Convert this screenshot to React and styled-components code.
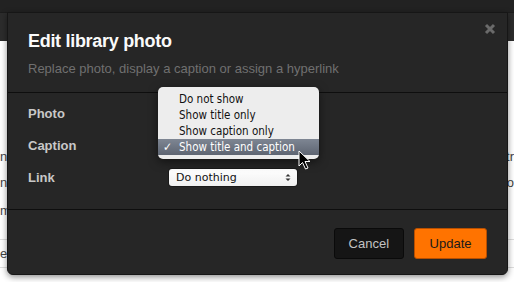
import React from 'react';
import styled, { createGlobalStyle } from 'styled-components';

const GlobalStyle = createGlobalStyle`
  html, body {
    margin: 0;
    padding: 0;
    background: #fff;
    overflow: hidden;
  }
  body {
    font-family: "Liberation Sans", Arial, sans-serif;
  }
`;

const Page = styled.div`
  position: relative;
  width: 514px;
  height: 282px;
  overflow: hidden;
  background: #fff;
`;

const TopBar = styled.div`
  height: 12px;
  background: #222;
`;

const SubBar = styled.div`
  height: 29px;
  background: #2c2c2c;
  border-top: 1px solid #1c1c1c;
  box-sizing: border-box;
`;

const Content = styled.div`
  display: flex;
  flex-direction: column;
  padding-top: 103px;
  font-size: 13px;
  color: #444;
`;

const BackRow = styled.div`
  display: flex;
  justify-content: space-between;
  height: ${({ $h }) => $h}px;
  line-height: ${({ $lh }) => $lh}px;
  border-bottom: ${({ $line }) => ($line ? '1px solid #ddd' : 'none')};
`;

const Fragment = styled.span`
  white-space: nowrap;
`;

const Modal = styled.div`
  position: absolute;
  left: 7px;
  top: 12px;
  width: 501px;
  height: 263px;
  box-sizing: border-box;
  background: #262626;
  border: 1px solid #161616;
  border-radius: 0 0 6px 6px;
  box-shadow: 0 2px 6px rgba(0, 0, 0, 0.45);
  display: flex;
  flex-direction: column;
`;

const Header = styled.div`
  position: relative;
  height: 80px;
  box-sizing: border-box;
  padding: 16px 20px 0;
  border-bottom: 1px solid #0e0e0e;
`;

const Title = styled.h3`
  margin: 0;
  font-size: 18px;
  line-height: 24px;
  font-weight: bold;
  color: #fafafa;
  letter-spacing: -0.3px;
`;

const Subtitle = styled.p`
  margin: 8px 0 0;
  font-size: 13px;
  line-height: 16px;
  color: #707070;
`;

const Close = styled.button`
  position: absolute;
  top: 10px;
  right: 11px;
  width: 12px;
  height: 12px;
  padding: 0;
  border: 0;
  background: none;
  display: flex;
`;

const Body = styled.div`
  position: relative;
  height: 117px;
  box-sizing: border-box;
  padding: 4px 20px 0;
  border-bottom: 1px solid #0e0e0e;
  display: flex;
  flex-direction: column;
`;

const FormRow = styled.div`
  display: flex;
  align-items: center;
  height: 32px;
`;

const Label = styled.label`
  width: 141px;
  font-size: 13px;
  font-weight: bold;
  color: #c8c8c8;
`;

const Select = styled.div`
  width: 128px;
  height: 17px;
  box-sizing: border-box;
  background: linear-gradient(#ffffff, #f0f0f0);
  border-radius: 3px;
  display: flex;
  align-items: center;
  justify-content: space-between;
  padding: 0 6px 0 7px;
  font-family: "DejaVu Sans", sans-serif;
  font-size: 11px;
  color: #111;
  box-shadow: 0 0 0 1px rgba(0, 0, 0, 0.3);
`;

const Menu = styled.ul`
  position: absolute;
  left: 150px;
  top: -6px;
  width: 161px;
  margin: 0;
  padding: 4px 0 4px;
  list-style: none;
  background: rgba(242, 242, 242, 0.98);
  border-radius: 5px;
  box-shadow: 0 3px 10px rgba(0, 0, 0, 0.5);
  font-family: "DejaVu Sans Condensed", "Liberation Sans", sans-serif;
  font-size: 11.5px;
`;

const MenuItem = styled.li`
  position: relative;
  height: 16px;
  line-height: 16px;
  padding-left: 21px;
  color: ${({ $active }) => ($active ? '#fff' : '#111')};
  background: ${({ $active }) => ($active ? 'linear-gradient(#7e8693, #5e6572)' : 'transparent')};
`;

const Check = styled.span`
  position: absolute;
  left: 5px;
  top: 0;
  font-size: 12px;
  font-weight: bold;
`;

const Cursor = styled.svg`
  position: absolute;
  left: 290px;
  top: 57px;
`;

const Footer = styled.div`
  flex: 1;
  display: flex;
  justify-content: flex-end;
  align-items: flex-start;
  gap: 10px;
  padding: 18px 20px 0;
`;

const Button = styled.button`
  height: 31px;
  padding: 0 ${({ $primary }) => ($primary ? '14.5px' : '14px')};
  border-radius: 3px;
  font-family: "Liberation Sans", Arial, sans-serif;
  font-size: 13px;
  border: 1px solid ${({ $primary }) => ($primary ? '#b84f00' : '#0a0a0a')};
  background: ${({ $primary }) => ($primary ? '#ff7300' : '#151515')};
  color: ${({ $primary }) => ($primary ? '#1a1a1a' : '#c2c2c2')};
`;

const options = ['Do not show', 'Show title only', 'Show caption only', 'Show title and caption'];

export default function App() {
  return (
    <>
      <GlobalStyle />
      <Page>
        <TopBar />
        <SubBar />
        <Content>
          <BackRow $h={26} $lh={26}><Fragment>n</Fragment><Fragment>tr</Fragment></BackRow>
          <BackRow $h={26} $lh={26}><Fragment>n</Fragment><Fragment>fo</Fragment></BackRow>
          <BackRow $h={43} $lh={30} $line><Fragment>m</Fragment><Fragment /></BackRow>
          <BackRow $h={27} $lh={27} $line><Fragment>e20</Fragment><Fragment /></BackRow>
        </Content>
        <Modal>
          <Header>
            <Title>Edit library photo</Title>
            <Subtitle>Replace photo, display a caption or assign a hyperlink</Subtitle>
            <Close aria-label="Close">
              <svg width="12" height="12" viewBox="0 0 12 12">
                <path d="M2 2 L10 10 M10 2 L2 10" stroke="#6a6a6a" strokeWidth="3" strokeLinecap="butt" />
              </svg>
            </Close>
          </Header>
          <Body>
            <FormRow><Label>Photo</Label></FormRow>
            <FormRow><Label>Caption</Label></FormRow>
            <FormRow>
              <Label>Link</Label>
              <Select>
                <span>Do nothing</span>
                <svg width="6" height="9" viewBox="0 0 6 9">
                  <path d="M0.5 3.5 L3 1 L5.5 3.5 Z M0.5 5.5 L3 8 L5.5 5.5 Z" fill="#333" />
                </svg>
              </Select>
            </FormRow>
            <Menu>
              {options.map((o, i) => (
                <MenuItem key={o} $active={i === 3}>
                  {i === 3 && <Check>✓</Check>}
                  {o}
                </MenuItem>
              ))}
            </Menu>
            <Cursor width="14" height="21" viewBox="0 0 14 21">
              <path d="M1 1 L1 16 L4.5 12.5 L7.5 19 L10 18 L7 11.5 L12 11.5 Z" fill="#000" stroke="#fff" strokeWidth="1" />
            </Cursor>
          </Body>
          <Footer>
            <Button>Cancel</Button>
            <Button $primary>Update</Button>
          </Footer>
        </Modal>
      </Page>
    </>
  );
}
